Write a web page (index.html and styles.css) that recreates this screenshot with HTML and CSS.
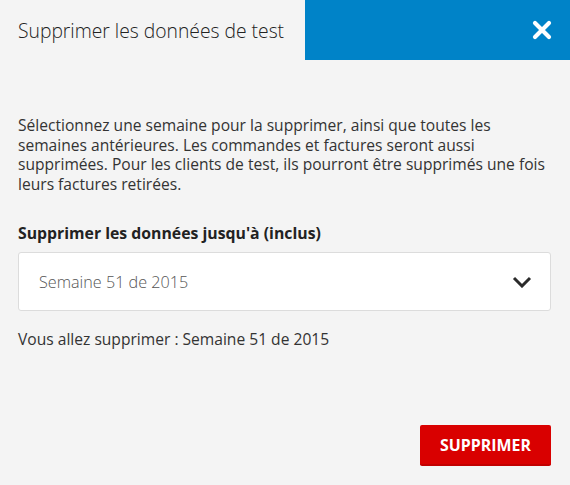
FILE: index.html
```html
<!DOCTYPE html>
<html lang="fr">
<head>
<meta charset="utf-8">
<link rel="stylesheet" href="styles.css">
</head>
<body>
<div class="dialog">
  <header class="dialog-header">
    <h1 class="dialog-title">Supprimer les données de test</h1>
    <button class="close-btn" aria-label="Fermer">
      <svg width="20" height="20" viewBox="0 0 20 20"><path d="M3 3L17 17M17 3L3 17" stroke="#fff" stroke-width="4.2" stroke-linecap="round" fill="none"/></svg>
    </button>
  </header>
  <main class="dialog-body">
    <p class="intro">Sélectionnez une semaine pour la supprimer, ainsi que toutes les semaines antérieures. Les commandes et factures seront aussi supprimées. Pour les clients de test, ils pourront être supprimés une fois leurs factures retirées.</p>
    <label class="field-label">Supprimer les données jusqu'à (inclus)</label>
    <div class="select">
      <span class="select-value">Semaine 51 de 2015</span>
      <svg class="chevron" width="20" height="12" viewBox="0 0 20 12"><path d="M2 2L10 10L18 2" stroke="#2b2b2b" stroke-width="3" fill="none"/></svg>
    </div>
    <p class="summary">Vous allez supprimer : Semaine 51 de 2015</p>
  </main>
  <footer class="dialog-footer">
    <button class="danger-btn">SUPPRIMER</button>
  </footer>
</div>
</body>
</html>
```
FILE: styles.css
```css
html, body {
  margin: 0;
  padding: 0;
  background: #f4f4f4;
}
body {
  font-family: "Open Sans", "Liberation Sans", sans-serif;
  color: #333;
  width: 570px;
  height: 485px;
  overflow: hidden;
}
.dialog {
  display: flex;
  flex-direction: column;
  height: 485px;
}
.dialog-header {
  display: flex;
  height: 60px;
}
.dialog-title {
  flex: 1;
  margin: 0;
  padding: 0 0 0 18px;
  font-size: 19.3px;
  font-weight: 300;
  line-height: 62px;
  color: #222;
  white-space: nowrap;
}
.close-btn {
  flex: 0 0 265px;
  height: 60px;
  border: 0;
  margin: 0;
  padding: 0 18px 0 0;
  background: #0083c8;
  display: flex;
  align-items: center;
  justify-content: flex-end;
}
.dialog-body {
  flex: 1;
  padding: 56px 19px 0 18px;
  display: flex;
  flex-direction: column;
}
.intro {
  margin: 0;
  font-size: 15.6px;
  line-height: 19.5px;
  color: #333;
}
.field-label {
  margin-top: 30px;
  font-size: 15.8px;
  font-weight: 700;
  line-height: 19.5px;
  color: #222;
}
.select {
  margin-top: 8px;
  height: 55px;
  background: #fff;
  border: 1px solid #dcdcdc;
  border-radius: 3px;
  display: flex;
  align-items: center;
  justify-content: space-between;
  padding: 2px 18px 0 20px;
  box-sizing: content-box;
}
.select-value {
  font-size: 16.2px;
  font-weight: 300;
  color: #555;
}
.chevron {
  margin-top: -1px;
}
.summary {
  margin: 19px 0 0;
  font-size: 15.6px;
  line-height: 19.5px;
  color: #333;
}
.dialog-footer {
  display: flex;
  justify-content: flex-end;
  padding: 0 19px 19px 0;
}
.danger-btn {
  width: 131px;
  height: 41px;
  border: 0;
  border-radius: 2px;
  background: #d90000;
  border-bottom: 2px solid #c20000;
  color: #fff;
  font-family: "Open Sans", "Liberation Sans", sans-serif;
  font-size: 15.9px;
  font-weight: 700;
  padding-top: 1px;
}
```
